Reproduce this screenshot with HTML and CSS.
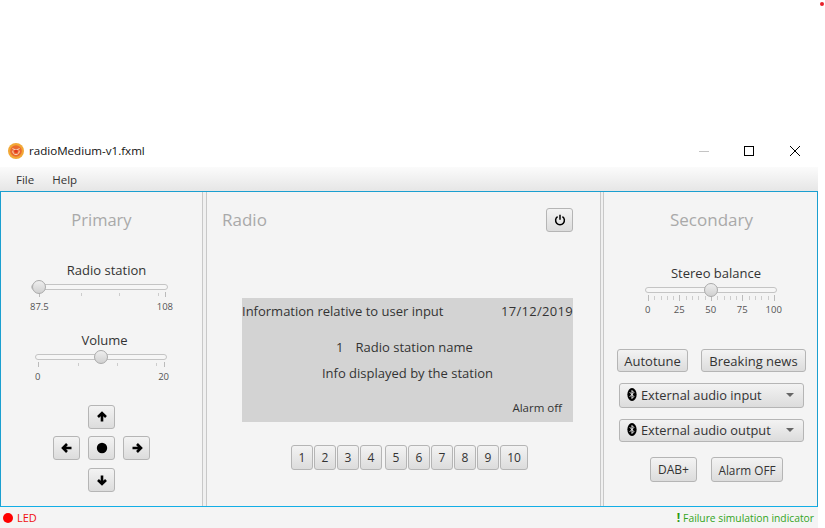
FILE: index.html
```html
<!DOCTYPE html>
<html lang="en">
<head>
    <meta charset="UTF-8">
    <meta name="viewport" content="width=device-width, initial-scale=1.0">
    <title>radioMedium-v1.fxml</title>
    <link rel="stylesheet" href="styles.css">
</head>
<body>
    <span class="desktop-dot"></span>

    <div class="window">
        <div class="titlebar">
            <svg class="app-icon" width="16" height="16" viewBox="0 0 16 16">
                <circle cx="8" cy="8" r="8" fill="#f2a735"/>
                <circle cx="8" cy="8" r="5.8" fill="#ea6a2e"/>
                <path d="M4.5 5.5C6 7 10 7 11.5 5.5M11 7.5a3.2 3 0 1 1-6 0" fill="none" stroke="#fbd6c0" stroke-width="1"/>
                <circle cx="8" cy="8.2" r="1.6" fill="#e2371f"/>
            </svg>
            <span class="window-title">radioMedium-v1.fxml</span>
            <div class="window-controls">
                <svg width="45" height="12" viewBox="0 0 45 12"><path d="M0 6.5h10" stroke="#c4c4c4"/></svg>
                <svg width="46" height="12" viewBox="0 0 46 12"><rect x="0.5" y="1.5" width="9" height="9" fill="none" stroke="#000"/></svg>
                <svg width="10" height="12" viewBox="0 0 10 12"><path d="M0 1L10 11M10 1L0 11" stroke="#000"/></svg>
            </div>
        </div>

        <div class="menubar">
            <span>File</span>
            <span>Help</span>
        </div>

        <div class="main">
            <section class="pane pane-left">
                <h2 class="pane-title">Primary</h2>

                <div class="slider slider-station">
                    <div class="slider-label">Radio station</div>
                    <div class="track"><span class="thumb" style="left: 0"></span></div>
                    <div class="ticks">
                        <i class="major"></i><i></i><i></i><i></i><i class="major"></i>
                    </div>
                    <div class="tick-labels"><span>87.5</span><span>108</span></div>
                </div>

                <div class="slider slider-volume">
                    <div class="slider-label">Volume</div>
                    <div class="track"><span class="thumb" style="left: 58px"></span></div>
                    <div class="ticks">
                        <i class="major"></i><i></i><i></i><i></i><i class="major"></i>
                    </div>
                    <div class="tick-labels"><span>0</span><span>20</span></div>
                </div>

                <div class="dpad">
                    <button class="btn dpad-up"><svg class="arrow" width="12" height="12" viewBox="0 0 12 12"><path d="M6 10.5V2.5M2 6l4-4 4 4"/></svg></button>
                    <button class="btn dpad-left"><svg class="arrow" width="12" height="12" viewBox="0 0 12 12"><path d="M10.5 6H2.5M6 2L2 6l4 4"/></svg></button>
                    <button class="btn dpad-mid"><svg width="12" height="12" viewBox="0 0 12 12"><circle cx="6" cy="6" r="5.2"/></svg></button>
                    <button class="btn dpad-right"><svg class="arrow" width="12" height="12" viewBox="0 0 12 12"><path d="M1.5 6H9.5M6 2l4 4-4 4"/></svg></button>
                    <button class="btn dpad-down"><svg class="arrow" width="12" height="12" viewBox="0 0 12 12"><path d="M6 1.5V9.5M2 6l4 4 4-4"/></svg></button>
                </div>
            </section>

            <div class="divider"></div>

            <section class="pane pane-center">
                <div class="radio-head">
                    <h2 class="pane-title">Radio</h2>
                    <button class="btn power-btn">
                        <svg width="12" height="12" viewBox="0 0 12 12"><path d="M3.6 2.6a4.4 4.4 0 1 0 4.8 0M6 0.8v5" fill="none" stroke="#000" stroke-width="1.5"/></svg>
                    </button>
                </div>

                <div class="display">
                    <div class="display-top">
                        <span>Information relative to user input</span>
                        <span class="display-date">17/12/2019</span>
                    </div>
                    <div class="display-station"><span>1</span><span>Radio station name</span></div>
                    <div class="display-info">Info displayed by the station</div>
                    <div class="display-alarm">Alarm off</div>
                </div>

                <div class="presets">
                    <div class="preset-group">
                        <button class="btn preset">1</button>
                        <button class="btn preset">2</button>
                        <button class="btn preset">3</button>
                        <button class="btn preset">4</button>
                    </div>
                    <div class="preset-group">
                        <button class="btn preset">5</button>
                        <button class="btn preset">6</button>
                        <button class="btn preset">7</button>
                        <button class="btn preset">8</button>
                        <button class="btn preset">9</button>
                        <button class="btn preset preset-wide">10</button>
                    </div>
                </div>
            </section>

            <div class="divider"></div>

            <section class="pane pane-right">
                <h2 class="pane-title">Secondary</h2>

                <div class="slider slider-balance">
                    <div class="slider-label">Stereo balance</div>
                    <div class="track"><span class="thumb" style="left: 58px"></span></div>
                    <div class="ticks ticks-fine">
                        <i class="major"></i><i></i><i></i><i></i><i></i>
                        <i class="major"></i><i></i><i></i><i></i><i></i>
                        <i class="major"></i><i></i><i></i><i></i><i></i>
                        <i class="major"></i><i></i><i></i><i></i><i></i>
                        <i class="major"></i>
                    </div>
                    <div class="tick-labels"><span>0</span><span>25</span><span>50</span><span>75</span><span>100</span></div>
                </div>

                <div class="btn-row btn-row-top">
                    <button class="btn btn-autotune">Autotune</button>
                    <button class="btn btn-news">Breaking news</button>
                </div>

                <button class="btn combo combo-input">
                    <svg width="10" height="13" viewBox="0 0 10 14"><ellipse cx="5" cy="7" rx="5" ry="7"/><path d="M2.5 4.5L7 9.2 5 11.3V2.7L7 4.8 2.5 9.5" fill="none" stroke="#fff"/></svg>
                    <span class="combo-text">External audio input</span>
                    <span class="combo-arrow"></span>
                </button>
                <button class="btn combo combo-output">
                    <svg width="10" height="13" viewBox="0 0 10 14"><ellipse cx="5" cy="7" rx="5" ry="7"/><path d="M2.5 4.5L7 9.2 5 11.3V2.7L7 4.8 2.5 9.5" fill="none" stroke="#fff"/></svg>
                    <span class="combo-text">External audio output</span>
                    <span class="combo-arrow"></span>
                </button>

                <div class="btn-row btn-row-bottom">
                    <button class="btn btn-dab">DAB+</button>
                    <button class="btn btn-alarm">Alarm OFF</button>
                </div>
            </section>
        </div>

        <div class="statusbar">
            <div class="led"><span class="led-dot"></span>LED</div>
            <div class="failure"><b>!</b>Failure simulation indicator</div>
        </div>
    </div>
</body>
</html>
```

FILE: styles.css
```css
* {
    box-sizing: border-box;
}

body {
    margin: 0;
    height: 528px;
    overflow: hidden;
    background-color: #fff;
    font-family: "Open Sans", "Noto Sans", sans-serif;
    font-size: 13px;
    color: #333;
}

.desktop-dot {
    position: absolute;
    top: 2px;
    left: 820px;
    width: 4px;
    height: 4px;
    border-radius: 50%;
    background-color: #e8202a;
}

.window {
    width: 818px;
    padding-top: 137px;
}

.titlebar {
    height: 30px;
    display: flex;
    align-items: center;
    padding-left: 8px;
    padding-bottom: 3px;
    background-color: #fff;
}

.window-title {
    margin-left: 5px;
    font-size: 11.6px;
    color: #111;
}

.window-controls {
    margin-left: auto;
    margin-right: 18px;
    display: flex;
    align-items: center;
}

.menubar {
    height: 24px;
    display: flex;
    gap: 18px;
    align-items: center;
    padding-left: 16px;
    font-size: 11.5px;
    background: linear-gradient(#fbfbfb, #e6e6e6);
}

.main {
    height: 316px;
    display: grid;
    grid-template-columns: 201px 5px 393px 4px 1fr;
    border: 1px solid #1a9fd0;
    border-bottom-color: #12aee6;
    background-color: #f4f4f4;
}

.divider {
    background-color: #f0f0f0;
    border-left: 1px solid #c8c8c8;
    border-right: 1px solid #c8c8c8;
}

.pane {
    display: flex;
    flex-direction: column;
}

.pane-title {
    margin: 0;
    font-size: 17px;
    font-weight: normal;
    color: #a9a9a9;
    text-align: center;
    line-height: 24px;
}

/* left */
.pane-left {
    padding-top: 16px;
}

.pane-left .pane-title {
    font-size: 16.5px;
}

.slider {
    position: relative;
}

.slider-label {
    text-align: center;
    line-height: 18px;
    margin-bottom: 5px;
}

.track {
    position: relative;
    height: 6px;
    border: 1px solid #c4c4c4;
    border-radius: 3px;
    background-color: #f6f6f6;
}

.thumb {
    position: absolute;
    top: -5px;
    width: 14px;
    height: 14px;
    border-radius: 50%;
    border: 1px solid #aaa;
    background: linear-gradient(#eee, #d0d0d0);
}

.ticks {
    display: flex;
    justify-content: flex-start;
    height: 6px;
    margin-top: 2px;
}

.ticks i {
    width: 1px;
    height: 3px;
    margin-top: 1px;
    background-color: #ccc;
}

.ticks i.major {
    height: 5px;
    margin-top: 0;
    background-color: #bbb;
}

.tick-labels {
    display: flex;
    justify-content: space-between;
    margin-top: 2px;
    font-size: 9.5px;
    line-height: 14px;
    color: #555;
}

.slider-station {
    margin-top: 29px;
    margin-left: 30px;
    width: 137px;
}

.slider-station .slider-label {
    padding-left: 14px;
}

.slider-station .ticks {
    margin-left: 8px;
}

.slider-station .ticks i:nth-child(2) {
    margin-left: 41px;
}

.slider-station .ticks i:nth-child(3) {
    margin-left: 37px;
}

.slider-station .ticks i:nth-child(4) {
    margin-left: 38px;
}

.slider-station .ticks i:nth-child(5) {
    margin-left: 6px;
}

.slider-station .tick-labels {
    margin-left: -1px;
    margin-right: -5px;
}

.slider-volume {
    margin-top: 17px;
    margin-left: 34px;
    width: 132px;
}

.slider-volume .slider-label {
    padding-left: 7px;
}

.slider-volume .ticks {
    margin-left: 3px;
}

.slider-volume .ticks i:nth-child(2) {
    margin-left: 39px;
}

.slider-volume .ticks i:nth-child(3) {
    margin-left: 38px;
}

.slider-volume .ticks i:nth-child(4) {
    margin-left: 38px;
}

.slider-volume .ticks i:nth-child(5) {
    margin-left: 7px;
}

.slider-volume .tick-labels {
    margin-right: -2px;
}

.btn {
    display: flex;
    align-items: center;
    justify-content: center;
    padding: 0;
    font-family: inherit;
    font-size: 13px;
    color: #333;
    border: 1px solid #b5b5b5;
    border-radius: 3px;
    background: linear-gradient(#f3f3f3, #dcdcdc);
}

.arrow {
    fill: none;
    stroke: #000;
    stroke-width: 2.6;
}

.dpad {
    margin-top: 21px;
    margin-left: 52px;
    width: 98px;
    display: grid;
    grid-template-columns: 27px 27px 27px;
    grid-template-rows: 24px 24px 25px;
    column-gap: 8px;
    row-gap: 7px;
}

.dpad-up {
    grid-column: 2;
    grid-row: 1;
}

.dpad-left {
    grid-column: 1;
    grid-row: 2;
}

.dpad-mid {
    grid-column: 2;
    grid-row: 2;
}

.dpad-right {
    grid-column: 3;
    grid-row: 2;
}

.dpad-down {
    grid-column: 2;
    grid-row: 3;
    height: 24px;
    align-self: end;
}

/* center */
.pane-center {
    padding: 16px 27px 0 15px;
}

.radio-head {
    display: flex;
    justify-content: space-between;
    align-items: center;
    height: 24px;
}

.power-btn {
    width: 27px;
    height: 24px;
}

.display {
    margin-top: 66px;
    margin-left: 20px;
    height: 124px;
    background-color: #d3d3d3;
    display: flex;
    flex-direction: column;
}

.display-top {
    display: flex;
    justify-content: space-between;
    line-height: 18px;
    margin-top: 4px;
}

.display-date {
    letter-spacing: 0.3px;
}

.display-station {
    display: flex;
    justify-content: center;
    gap: 12px;
    line-height: 18px;
    margin-top: 18px;
    padding-right: 6px;
}

.display-info {
    text-align: center;
    line-height: 18px;
    margin-top: 8px;
}

.display-alarm {
    margin-top: auto;
    margin-bottom: 5px;
    margin-right: 11px;
    text-align: right;
    font-size: 11.5px;
    line-height: 18px;
}

.presets {
    margin-top: 23px;
    margin-left: 69px;
    display: flex;
    gap: 3px;
}

.preset-group {
    display: flex;
    gap: 1px;
}

.preset {
    width: 22px;
    height: 25px;
    font-size: 12px;
}

.preset-wide {
    width: 28px;
}

/* right */
.pane-right {
    padding-top: 16px;
}

.pane-right .pane-title {
    padding-left: 2px;
}

.slider-balance {
    margin-top: 32px;
    margin-left: 41px;
    width: 132px;
}

.slider-balance .slider-label {
    padding-left: 10px;
}

.slider-balance .ticks {
    justify-content: space-between;
    margin-left: 3px;
    margin-right: 2px;
}

.ticks-fine i.major {
    height: 6px;
}

.ticks-fine i {
    height: 4px;
}

.slider-balance .tick-labels {
    display: grid;
    grid-template-columns: repeat(5, 31.5px);
    justify-content: start;
    margin-left: -13px;
    text-align: center;
}

.btn-row {
    display: flex;
}

.btn-row-top {
    margin-top: 32px;
    margin-left: 13px;
    gap: 13px;
}

.btn-autotune {
    width: 71px;
    height: 23px;
}

.btn-news {
    width: 105px;
    height: 23px;
}

.combo {
    margin-left: 15px;
    width: 185px;
    justify-content: flex-start;
    padding-left: 7px;
    padding-bottom: 2px;
    gap: 4px;
    font-size: 12.8px;
}

.combo-input {
    margin-top: 11px;
    height: 25px;
}

.combo-output {
    margin-top: 11px;
    height: 23px;
}

.combo-arrow {
    margin-left: auto;
    margin-right: 9px;
    border-left: 4px solid transparent;
    border-right: 4px solid transparent;
    border-top: 4px solid #666;
}

.btn-row-bottom {
    margin-top: 15px;
    margin-left: 46px;
    gap: 14px;
}

.btn-dab {
    width: 47px;
    height: 25px;
    font-size: 12px;
}

.btn-alarm {
    width: 72px;
    height: 25px;
    font-size: 11.8px;
}

/* status */
.statusbar {
    height: 21px;
    display: flex;
    justify-content: space-between;
    align-items: center;
    padding: 0 4px 0 3px;
    font-size: 11px;
    background-color: #f4f4f4;
}

.led {
    display: flex;
    align-items: center;
    gap: 4px;
    color: #f01010;
}

.led-dot {
    width: 10px;
    height: 10px;
    border-radius: 50%;
    background-color: #f00;
}

.failure {
    font-size: 10.3px;
    color: #33a51c;
}

.failure b {
    margin-right: 3px;
    font-size: 12px;
    color: #2a9a10;
}
```
